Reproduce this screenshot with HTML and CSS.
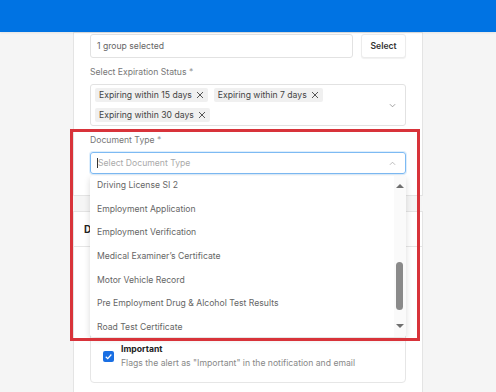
FILE: index.html
```html
<!DOCTYPE html>
<html lang="en">
  <head>
    <meta charset="UTF-8" />
    <meta name="viewport" content="width=device-width, initial-scale=1.0" />
    <title>Create Alert</title>
    <link rel="stylesheet" href="styles.css">
  </head>
  <body>
    <header class="topbar"></header>

    <div class="column">
      <div class="card card-first">
        <div class="group-row">
          <div class="text-input">1 group selected</div>
          <button class="btn-select">Select</button>
        </div>

        <div class="field">
          <label class="field-label">Select Expiration Status <span class="req">*</span></label>
          <div class="multi-select">
            <div class="tags">
              <span class="tag">Expiring within 15 days
                <svg class="tag-x" viewBox="0 0 8 8"><path d="M1 1L7 7M7 1L1 7" /></svg>
              </span>
              <span class="tag">Expiring within 7 days
                <svg class="tag-x" viewBox="0 0 8 8"><path d="M1 1L7 7M7 1L1 7" /></svg>
              </span>
              <span class="tag">Expiring within 30 days
                <svg class="tag-x" viewBox="0 0 8 8"><path d="M1 1L7 7M7 1L1 7" /></svg>
              </span>
            </div>
            <svg class="chevron" viewBox="0 0 8 5"><path d="M1 1L4 4L7 1" /></svg>
          </div>
        </div>

        <div class="field">
          <label class="field-label">Document Type <span class="req">*</span></label>
          <div class="select-wrap">
            <div class="select-input focused">
              <span class="caret"></span>
              <span class="placeholder">Select Document Type</span>
              <svg class="chevron chevron-up" viewBox="0 0 8 5"><path d="M1 4L4 1L7 4" /></svg>
            </div>

            <div class="dropdown">
              <ul class="options">
                <li>Driving License SI 2</li>
                <li>Employment Application</li>
                <li>Employment Verification</li>
                <li>Medical Examiner’s Certificate</li>
                <li>Motor Vehicle Record</li>
                <li>Pre Employment Drug &amp; Alcohol Test Results</li>
                <li>Road Test Certificate</li>
              </ul>
              <div class="scrollbar">
                <span class="arrow arrow-up"></span>
                <span class="thumb"></span>
                <span class="arrow arrow-down"></span>
              </div>
            </div>
          </div>
        </div>
      </div>

      <div class="card card-second">
        <div class="card-header">Delivery Settings</div>
        <div class="card-body">
          <div class="option-box">
            <span class="checkbox">
              <svg viewBox="0 0 10 10"><path d="M2.5 5.2L4.3 7L7.6 3.2" /></svg>
            </span>
            <div class="option-text">
              <div class="option-title">Important</div>
              <div class="option-desc">Flags the alert as "Important" in the notification and email</div>
            </div>
          </div>
        </div>
      </div>

      <!-- highlight frame drawn over the screenshot -->
      <div class="highlight"></div>
    </div>
  </body>
</html>
```

FILE: styles.css
```css
body {
  margin: 0;
  padding: 0;
  background-color: #f5f5f5;
  font-family: Inter, "Liberation Sans", Arial, sans-serif;
  font-size: 8.65px;
  color: #555;
  height: 392px;
  overflow: hidden;
}

.topbar {
  position: relative;
  z-index: 3;
  height: 32px;
  background-color: #0073e3;
  box-shadow: 0 1px 2px rgba(0, 0, 0, 0.08);
}

.column {
  position: relative;
  width: 350px;
  margin: 0 auto;
}

.card {
  background-color: #ffffff;
  border: 1px solid #e4e4e4;
}

.card-first {
  padding: 1px 16px 21px;
}

.card-second {
  margin-top: 15px;
}

/* group picker */
.group-row {
  display: flex;
  gap: 8px;
}

.text-input {
  flex: 1;
  height: 24px;
  box-sizing: border-box;
  border: 1px solid #e2e2e2;
  border-radius: 3px;
  padding: 0 6px;
  line-height: 22px;
  color: #666;
}

.btn-select {
  width: 45px;
  height: 24px;
  padding: 0;
  border: 1px solid #ececec;
  border-radius: 3px;
  background-color: #fff;
  box-shadow: 0 1px 1px rgba(0, 0, 0, 0.06);
  font-family: inherit;
  font-size: 8.65px;
  font-weight: 600;
  color: #333;
}

.field {
  margin-top: 7px;
}

.field-label {
  display: block;
  line-height: 14px;
  margin-bottom: 5px;
  color: #777;
}

.req {
  color: #999;
}

/* expiration multi select */
.multi-select {
  display: flex;
  align-items: center;
  border: 1px solid #e2e2e2;
  border-radius: 3px;
  padding: 3px 4px;
}

.tags {
  flex: 1;
  display: flex;
  flex-wrap: wrap;
  gap: 6px;
  width: 0;
  padding-right: 30px;
}

.tag {
  display: inline-flex;
  align-items: center;
  gap: 4px;
  height: 14px;
  padding: 0 4px;
  background-color: #f0f0f0;
  border-radius: 2px;
  color: #444;
  white-space: nowrap;
}

.tag-x {
  width: 8px;
  height: 8px;
  fill: none;
  stroke: #444;
  stroke-width: 0.9;
}

.chevron {
  width: 7px;
  height: 5px;
  margin-right: 5px;
  fill: none;
  stroke: #888;
  stroke-width: 0.9;
}

/* document type select */
.select-wrap {
  position: relative;
}

.select-input {
  display: flex;
  align-items: center;
  height: 22px;
  box-sizing: border-box;
  border: 1px solid #d9d9d9;
  border-radius: 3px;
  padding: 0 6px;
}

.select-input.focused {
  border-color: #7dbaf3;
  box-shadow: 0 0 0 1px rgba(125, 186, 243, 0.25);
}

.caret {
  width: 1px;
  height: 10px;
  background-color: #333;
}

.placeholder {
  flex: 1;
  color: #aaa;
}

.chevron-up {
  stroke: #aaa;
  margin-right: 3px;
}

.dropdown {
  position: absolute;
  z-index: 2;
  top: 24px;
  left: 0;
  right: 0;
  height: 161px;
  overflow: hidden;
  background-color: #fff;
  border-radius: 3px;
  box-shadow: 0 2px 6px rgba(0, 0, 0, 0.15);
}

.options {
  list-style: none;
  margin: -2px 0 0;
  padding: 0 14px 0 7px;
}

.options li {
  height: 23.7px;
  line-height: 23.7px;
  color: #666;
  white-space: nowrap;
}

.scrollbar {
  position: absolute;
  top: 0;
  right: 0;
  bottom: 0;
  width: 12px;
  background-color: #fafafa;
}

.arrow {
  position: absolute;
  left: 2px;
  width: 0;
  height: 0;
  border-left: 4px solid transparent;
  border-right: 4px solid transparent;
}

.arrow-up {
  top: 8px;
  border-bottom: 4px solid #6f6f6f;
}

.arrow-down {
  bottom: 9px;
  border-top: 4px solid #6f6f6f;
}

.thumb {
  position: absolute;
  top: 86px;
  left: 2px;
  width: 7px;
  height: 48px;
  border-radius: 4px;
  background-color: #8a8a8a;
}

/* second card */
.card-header {
  height: 34px;
  line-height: 34px;
  padding-left: 10px;
  border-bottom: 1px solid #e6e6e6;
  font-size: 10px;
  font-weight: 700;
  color: #222;
}

.card-body {
  padding: 82px 16px 16px;
}

.option-box {
  display: flex;
  align-items: center;
  gap: 7px;
  padding: 12px;
  border: 1px solid #e6e6e6;
  border-radius: 4px;
}

.checkbox {
  display: flex;
  width: 11px;
  height: 11px;
  border-radius: 2px;
  background-color: #1a6fe3;
}

.checkbox svg {
  width: 11px;
  height: 11px;
  fill: none;
  stroke: #fff;
  stroke-width: 1.1;
}

.option-title {
  line-height: 14px;
  font-weight: 700;
  color: #222;
}

.option-desc {
  line-height: 14px;
  color: #888;
}

/* red frame */
.highlight {
  position: absolute;
  z-index: 4;
  top: 97px;
  left: -3px;
  width: 350px;
  height: 212px;
  box-sizing: border-box;
  border: 3px solid #d8333a;
}
```
